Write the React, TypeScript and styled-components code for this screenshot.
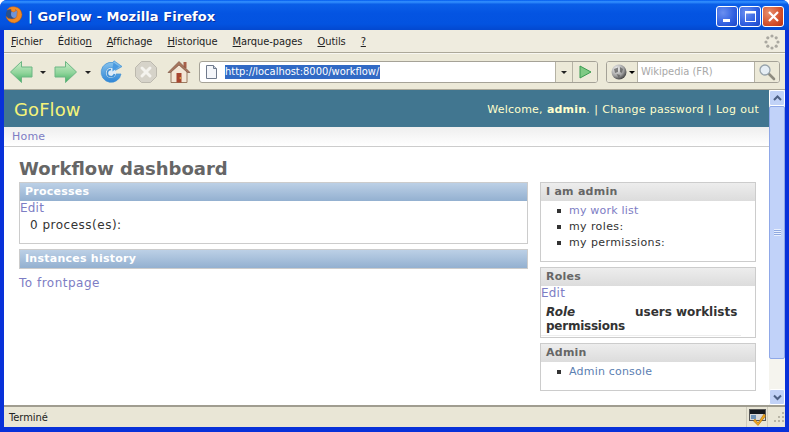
import React from "react";
import styled, { createGlobalStyle } from "styled-components";

const GlobalStyle = createGlobalStyle`
  html, body {
    margin: 0;
    padding: 0;
    overflow: hidden;
    background: #fff;
  }
  * {
    box-sizing: border-box;
  }
`;

const chromeFont = `"DejaVu Sans Condensed", "DejaVu Sans", sans-serif`;

const Window = styled.div`
  width: 789px;
  height: 432px;
  display: flex;
  flex-direction: column;
  overflow: hidden;
  border-radius: 7px 7px 0 0;
  background: #0831d9;
  font-family: "Liberation Sans", Arial, sans-serif;
`;

const TitleBar = styled.div`
  height: 30px;
  flex: none;
  display: flex;
  align-items: center;
  padding: 0 5px 0 5px;
  background: linear-gradient(to bottom, #0058ee 0%, #3593ff 6%, #0a5fe8 14%, #0454e2 45%, #0353e0 80%, #0348cf 100%);
`;

const TitleText = styled.div`
  flex: 1;
  margin: 3px 0 0 5px;
  font-family: "DejaVu Sans", sans-serif;
  font-size: 13px;
  font-weight: bold;
  letter-spacing: 0.08px;
  color: #fff;
  text-shadow: 1px 1px 0 #0a2c9a;
  white-space: pre;
`;

const CaptionButtons = styled.div`
  display: flex;
  gap: 1px;
  margin-top: 3px;
`;

const CaptionButton = styled.div<{ $close?: boolean }>`
  width: 22px;
  height: 21px;
  border: 1px solid #fff;
  border-radius: 3px;
  display: flex;
  align-items: center;
  justify-content: center;
  background: ${(p) =>
    p.$close
      ? "radial-gradient(circle at 30% 30%, #e8906e, #d4502c 60%, #b93212)"
      : "radial-gradient(circle at 30% 30%, #6a8ff0, #2f5fe0 60%, #1c46c6)"};
`;

const Chrome = styled.div`
  flex: 1;
  min-height: 0;
  margin: 0 4px;
  display: flex;
  flex-direction: column;
  background: #ece9d8;
`;

const MenuBar = styled.div`
  height: 23px;
  flex: none;
  display: flex;
  align-items: center;
  justify-content: space-between;
  padding: 1px 5px 0 7px;
  border-bottom: 1px solid #aca899;
  background: #efecdf;
`;

const MenuItems = styled.div`
  display: flex;
  gap: 15px;
  font-size: 11px;
  letter-spacing: -0.06px;
  font-family: ${chromeFont};
  color: #222;
`;

const MenuKey = styled.span`
  text-decoration: underline;
`;

const NavBar = styled.div`
  height: 36px;
  flex: none;
  display: flex;
  align-items: center;
  padding: 0 5px 0 5px;
  border-top: 1px solid #f8f7f1;
  background: #ece9d8;
`;

const NavIcon = styled.div<{ $gap?: number }>`
  display: flex;
  margin-right: ${(p) => p.$gap ?? 0}px;
`;

const Dropdown = styled.div<{ $before?: number; $gap: number; $dark?: boolean }>`
  width: 0;
  height: 0;
  margin: 2px ${(p) => p.$gap}px 0 ${(p) => p.$before ?? 6}px;
  border-left: 3px solid transparent;
  border-right: 3px solid transparent;
  border-top: 3px solid ${(p) => (p.$dark ? "#000" : "#222")};
`;

const UrlBox = styled.div`
  width: 399px;
  height: 22px;
  flex: none;
  display: flex;
  align-items: center;
  margin-left: 8px;
  margin-right: 8px;
  border: 1px solid #a5a297;
  border-radius: 3px;
  background: #fff;
  overflow: hidden;
`;

const UrlText = styled.div`
  flex: 1;
  display: flex;
  align-items: center;
  padding-left: 6px;
  font-family: ${chromeFont};
  font-size: 11px;
`;

const UrlSelected = styled.span`
  margin-left: 8px;
  padding: 0 1px 1px 0;
  background: #316ac5;
  color: #fff;
`;

const BoxCell = styled.div<{ $w: number }>`
  width: ${(p) => p.$w}px;
  height: 100%;
  flex: none;
  display: flex;
  align-items: center;
  justify-content: center;
  border-left: 1px solid #b5b2a4;
  background: #ece9d8;
`;

const SearchBox = styled.div`
  flex: 1;
  height: 22px;
  display: flex;
  align-items: center;
  border: 1px solid #a5a297;
  border-radius: 3px;
  overflow: hidden;
  background: #fff;
`;

const EnginePicker = styled.div`
  width: 31px;
  height: 100%;
  flex: none;
  display: flex;
  align-items: center;
  padding-left: 4px;
  background: #ece9d8;
  border-right: 1px solid #b5b2a4;
`;

const SearchHint = styled.div`
  flex: 1;
  padding-left: 3px;
  font-family: ${chromeFont};
  font-size: 11px;
  color: #a8a8a8;
  white-space: nowrap;
`;

const Viewport = styled.div`
  flex: 1;
  min-height: 0;
  display: flex;
  border-top: 1px solid #aca899;
  background: #fff;
`;

const Page = styled.div`
  flex: 1;
  min-width: 0;
  font-family: "DejaVu Sans", sans-serif;
  font-size: 11px;
  color: #333;
`;

const Header = styled.div`
  height: 37px;
  display: flex;
  align-items: center;
  justify-content: space-between;
  padding: 1px 10px 0;
  background: #417690;
  color: #ffc;
`;

const Brand = styled.div`
  font-size: 18px;
  letter-spacing: 0.1px;
  color: #f4f379;
`;

const UserTools = styled.div`
  font-size: 11px;
  letter-spacing: 0.2px;
  word-spacing: 0.5px;
`;

const Breadcrumbs = styled.div`
  height: 20px;
  display: flex;
  align-items: center;
  padding-left: 8px;
  border-bottom: 1px solid #ccc;
  background: linear-gradient(to bottom, #eee, #fff);
  color: #5b80b2;
`;

const Content = styled.div`
  padding: 10px 13px 0 15px;
`;

const PageTitle = styled.h1`
  margin: 0 0 2px;
  height: 23px;
  line-height: 23px;
  font-size: 18px;
  font-weight: bold;
  color: #666;
`;

const Columns = styled.div`
  display: grid;
  grid-template-columns: 509px 216px;
  column-gap: 12px;
  align-items: start;
`;

const Column = styled.div`
  display: flex;
  flex-direction: column;
  gap: 5px;
`;

const Module = styled.div<{ $h: number }>`
  height: ${(p) => p.$h}px;
  border: 1px solid #ccc;
`;

const PrimaryCaption = styled.div`
  height: 18px;
  line-height: 17px;
  padding-left: 5px;
  font-weight: bold;
  font-size: 11px;
  letter-spacing: 0.25px;
  color: #fff;
  background: linear-gradient(to bottom, #bcd0e6, #93b0d0);
`;

const SideCaption = styled.div`
  height: 18px;
  line-height: 17px;
  padding-left: 5px;
  font-weight: bold;
  font-size: 11px;
  letter-spacing: 0.25px;
  color: #666;
  background: linear-gradient(to bottom, #ededed, #dcdcdc);
`;

const ActionLink = styled.a<{ $muted?: boolean }>`
  color: ${(p) => (p.$muted ? "#7d7dc4" : "#5b80b2")};
  text-decoration: none;
  letter-spacing: 0.2px;
`;

const EditLine = styled.div`
  height: 16px;
  line-height: 15px;
  font-size: 12px;
`;

const ProcessLine = styled.div`
  padding: 1px 0 0 10px;
  height: 16px;
  letter-spacing: 0.5px;
  font-size: 12px;
  line-height: 15px;
`;

const FrontLink = styled.div`
  margin-top: 2px;
  font-size: 12px;
  letter-spacing: 0.25px;

  a {
    letter-spacing: 0.5px;
  }
`;

const LinkList = styled.ul`
  margin: 0;
  padding: 2px 0 0 16px;
  list-style: none;
  font-size: 11px;
  line-height: 16px;
  letter-spacing: 0.4px;
`;

const LinkItem = styled.li`
  display: flex;
  align-items: center;

  &::before {
    content: "";
    width: 4px;
    height: 4px;
    margin-right: 8px;
    background: #333;
  }
`;

const RoleTable = styled.div`
  display: grid;
  grid-template-columns: 85px auto auto;
  align-content: start;
  justify-content: start;
  column-gap: 4px;
  width: 200px;
  height: 34px;
  margin-left: 0;
  padding: 3px 0 0 5px;
  border-bottom: 1px solid #eee;
  font-size: 12px;
  font-weight: bold;
  line-height: 14px;
  color: #333;
`;

const RoleCell = styled.div<{ $wide?: boolean }>`
  grid-column: ${(p) => (p.$wide ? "1 / span 3" : "auto")};
  letter-spacing: ${(p) => (p.$wide ? "-0.25px" : "0")};
  font-style: normal;
`;

const RoleHead = styled(RoleCell)`
  font-style: italic;
`;

const Scrollbar = styled.div`
  width: 16px;
  flex: none;
  display: flex;
  flex-direction: column;
  background: #f5f4ee;
`;

const ScrollEnd = styled.div`
  height: 16px;
  flex: none;
  display: flex;
  align-items: center;
  justify-content: center;
  border-radius: 2px;
  border: 1px solid #fff;
  background: #c1d2f7;
`;

const ScrollThumb = styled.div`
  height: 253px;
  flex: none;
  display: flex;
  align-items: center;
  justify-content: center;
  border: 1px solid #8fa8e8;
  border-radius: 2px;
  background: #c1d2f9;
`;

const ScrollTrack = styled.div`
  flex: 1;
`;

const GripLines = styled.div`
  width: 7px;
  height: 7px;
  background: repeating-linear-gradient(to bottom, #e8effd 0 1px, #8fa8e0 1px 2px);
`;

const StatusBar = styled.div`
  height: 22px;
  flex: none;
  display: flex;
  align-items: center;
  justify-content: space-between;
  padding: 0 0 0 5px;
  border-top: 2px solid #a09d90;
  background: #e9e6d6;
  font-family: ${chromeFont};
  font-size: 11px;
  color: #222;
`;

const StatusRight = styled.div`
  display: flex;
  align-items: center;
  gap: 5px;
  height: 100%;
`;

const StatusPane = styled.div`
  height: 100%;
  display: flex;
  align-items: center;
  padding: 0 1px 0 2px;
  border-left: 1px solid #cfccbc;
  border-right: 1px solid #cfccbc;
`;

const BottomEdge = styled.div`
  height: 5px;
  flex: none;
`;

const ArrowIcon = ({ flip }: { flip?: boolean }) => (
  <svg width="24" height="24" viewBox="0 0 24 24" style={flip ? { transform: "scaleX(-1)" } : undefined}>
    <defs>
      <linearGradient id={flip ? "arrF" : "arrB"} x1="0" y1="0" x2="0" y2="1">
        <stop offset="0" stopColor="#cdeecb" />
        <stop offset="0.55" stopColor="#8fd49a" />
        <stop offset="1" stopColor="#3fae60" />
      </linearGradient>
    </defs>
    <path
      d="M1.5 12 L12.5 1.5 V7 H23 V17 H12.5 V22.5 Z"
      fill={`url(#${flip ? "arrF" : "arrB"})`}
      stroke="#6db684"
      strokeLinejoin="round"
    />
  </svg>
);

const ReloadIcon = () => (
  <svg width="24" height="24" viewBox="0 0 24 24">
    <defs>
      <linearGradient id="reloadBlue" x1="0" y1="0" x2="0" y2="1">
        <stop offset="0" stopColor="#8cc6ee" />
        <stop offset="1" stopColor="#2f86d6" />
      </linearGradient>
    </defs>
    <path
      d="M14 2.5 A10 10 0 1 0 22 14 H16.5 A5 5 0 1 1 13.5 8.2 V12 L23 6.5 L15 0.8 Z"
      fill="url(#reloadBlue)"
      stroke="#3f8fd4"
      strokeWidth="0.7"
      strokeLinejoin="round"
    />
    <circle cx="12" cy="13" r="5" fill="#dcebf8" />
    <path d="M12 9.5 A3.6 3.6 0 1 0 15.5 14" stroke="#3f8fd4" strokeWidth="1.6" fill="none" />
    <path d="M13.5 7.5 V11.5 L20 6.5 L14.5 2.5 Z" fill="#4a9ae0" />
  </svg>
);

const StopIcon = () => (
  <svg width="24" height="24" viewBox="0 0 24 24">
    <path d="M7.5 1.5 H16.5 L22.5 7.5 V16.5 L16.5 22.5 H7.5 L1.5 16.5 V7.5 Z" fill="#d6d3c9" stroke="#bcb9ae" />
    <path d="M8 8 L16 16 M16 8 L8 16" stroke="#f4f3ee" strokeWidth="3" strokeLinecap="round" />
  </svg>
);

const HomeIcon = () => (
  <svg width="24" height="24" viewBox="0 0 24 24">
    <path d="M4 11 V22.5 H20 V11 L12 4 Z" fill="#f3e7d6" stroke="#9a7a60" />
    <rect x="16.5" y="2" width="3" height="6" fill="#a8604a" />
    <path d="M1 12.5 L12 1.5 L23 12.5 L20.5 12.5 L12 5 L3.5 12.5 Z" fill="#a8765e" stroke="#7d5543" strokeWidth="0.7" />
    <rect x="9.5" y="13" width="5" height="9.5" fill="#a8452e" />
    <circle cx="13.3" cy="18" r="0.8" fill="#f1d84a" />
  </svg>
);

const FoxIcon = () => (
  <svg width="18" height="18" viewBox="0 0 18 18">
    <circle cx="9" cy="9" r="8.2" fill="#28508f" />
    <circle cx="10" cy="8" r="4" fill="#6f94d6" />
    <path
      d="M2 4 Q4.5 0 9.5 0.8 Q16 1.5 17 8.5 Q16.5 15 9.5 17 Q3 16.8 1 10.5 Q3.5 13.5 7.5 13 Q12.5 12.5 12 8 Q13.5 5.5 10.5 3.5 Q11.5 5.5 8.5 6 Q5.5 5.5 6 3 Q4 3 2 4 Z"
      fill="#f08a24"
      stroke="#c8601a"
      strokeWidth="0.5"
    />
  </svg>
);

const PageIcon = () => (
  <svg width="11" height="14" viewBox="0 0 11 14">
    <path d="M0.5 0.5 H7.5 L10.5 3.5 V13.5 H0.5 Z" fill="#f4f6fa" stroke="#6f7a8c" />
    <path d="M7.5 0.5 V3.5 H10.5" fill="#cdd5e2" stroke="#6f7a8c" />
  </svg>
);

const GoIcon = () => (
  <svg width="14" height="14" viewBox="0 0 14 14">
    <path d="M2 1 L13 7 L2 13 Z" fill="#7fca84" stroke="#3a9a50" strokeLinejoin="round" />
  </svg>
);

const WikiIcon = () => (
  <svg width="16" height="16" viewBox="0 0 16 16">
    <defs>
      <radialGradient id="wikiGlobe" cx="0.35" cy="0.3" r="0.85">
        <stop offset="0" stopColor="#f4f4f4" />
        <stop offset="0.55" stopColor="#a0a0a0" />
        <stop offset="1" stopColor="#1c1c1c" />
      </radialGradient>
    </defs>
    <circle cx="8" cy="8" r="7.5" fill="url(#wikiGlobe)" />
    <path d="M3 5 L7 3.5 L7 8 L4 9 Z M9 3 L12 5 L11 9 L9 8 Z M5.5 10 L9 11 L8 14 Z" fill="#5c5c5c" opacity="0.75" />
  </svg>
);

const MagnifierIcon = () => (
  <svg width="18" height="18" viewBox="0 0 18 18">
    <path d="M10.5 10.5 L16 16" stroke="#8f8c80" strokeWidth="2.6" strokeLinecap="round" />
    <circle cx="7" cy="7" r="5" fill="#e6eef5" stroke="#97a3ab" strokeWidth="1.3" />
  </svg>
);

const ThrobberIcon = () => (
  <svg width="16" height="16" viewBox="0 0 16 16" fill="#aaa8a0">
    <circle cx="8" cy="2" r="1.6" />
    <circle cx="12.2" cy="3.8" r="1.6" />
    <circle cx="14" cy="8" r="1.6" />
    <circle cx="12.2" cy="12.2" r="1.6" />
    <circle cx="8" cy="14" r="1.6" />
    <circle cx="3.8" cy="12.2" r="1.6" />
    <circle cx="2" cy="8" r="1.6" />
    <circle cx="3.8" cy="3.8" r="1.6" />
  </svg>
);

const ExtensionIcon = () => (
  <svg width="17" height="17" viewBox="0 0 17 17">
    <rect x="0.5" y="0.5" width="16" height="11" fill="#d8d8d8" stroke="#555" />
    <rect x="1" y="1" width="15" height="4" fill="#14181e" />
    <rect x="2" y="6" width="5" height="4" fill="#6f93b8" />
    <path d="M6 10 L9 14 L15 5 L16.5 7 L9 16.5 L4.5 12 Z" fill="#f2a81d" stroke="#a86c08" strokeWidth="0.6" />
  </svg>
);

const ResizeGrip = () => (
  <svg width="12" height="12" viewBox="0 0 12 12" fill="#b8b5a6">
    <rect x="9" y="1" width="2" height="2" />
    <rect x="5" y="5" width="2" height="2" />
    <rect x="9" y="5" width="2" height="2" />
    <rect x="1" y="9" width="2" height="2" />
    <rect x="5" y="9" width="2" height="2" />
    <rect x="9" y="9" width="2" height="2" />
  </svg>
);

const Chevron = ({ down }: { down?: boolean }) => (
  <svg width="9" height="7" viewBox="0 0 9 7">
    <path d={down ? "M1 1.5 L4.5 5 L8 1.5" : "M1 5 L4.5 1.5 L8 5"} stroke="#4d6185" strokeWidth="2" fill="none" />
  </svg>
);

export default function App() {
  return (
    <>
      <GlobalStyle />
      <Window>
        <TitleBar>
          <FoxIcon />
          <TitleText>| GoFlow - Mozilla Firefox</TitleText>
          <CaptionButtons>
            <CaptionButton>
              <svg width="13" height="13" viewBox="0 0 13 13">
                <rect x="2" y="9" width="7" height="3" fill="#fff" />
              </svg>
            </CaptionButton>
            <CaptionButton>
              <svg width="13" height="13" viewBox="0 0 13 13">
                <rect x="1.5" y="1.5" width="10" height="10" fill="none" stroke="#fff" />
                <rect x="1" y="1" width="11" height="2.5" fill="#fff" />
              </svg>
            </CaptionButton>
            <CaptionButton $close>
              <svg width="13" height="13" viewBox="0 0 13 13">
                <path d="M2 2 L11 11 M11 2 L2 11" stroke="#fff" strokeWidth="2.2" />
              </svg>
            </CaptionButton>
          </CaptionButtons>
        </TitleBar>
        <Chrome>
          <MenuBar>
            <MenuItems>
              <span><MenuKey>F</MenuKey>ichier</span>
              <span>Éditio<MenuKey>n</MenuKey></span>
              <span><MenuKey>A</MenuKey>ffichage</span>
              <span><MenuKey>H</MenuKey>istorique</span>
              <span><MenuKey>M</MenuKey>arque-pages</span>
              <span><MenuKey>O</MenuKey>utils</span>
              <span><MenuKey>?</MenuKey></span>
            </MenuItems>
            <ThrobberIcon />
          </MenuBar>
          <NavBar>
            <NavIcon><ArrowIcon /></NavIcon>
            <Dropdown $before={7} $gap={8} />
            <NavIcon><ArrowIcon flip /></NavIcon>
            <Dropdown $before={7} $gap={8} />
            <NavIcon $gap={11}><ReloadIcon /></NavIcon>
            <NavIcon $gap={9}><StopIcon /></NavIcon>
            <NavIcon><HomeIcon /></NavIcon>
            <UrlBox>
              <UrlText>
                <PageIcon />
                <UrlSelected>http://localhost:8000/workflow/</UrlSelected>
              </UrlText>
              <BoxCell $w={17}><Dropdown $before={0} $gap={0} /></BoxCell>
              <BoxCell $w={25}><GoIcon /></BoxCell>
            </UrlBox>
            <SearchBox>
              <EnginePicker>
                <WikiIcon />
                <Dropdown $before={2} $gap={0} $dark />
              </EnginePicker>
              <SearchHint>Wikipedia (FR)</SearchHint>
              <BoxCell $w={25}><MagnifierIcon /></BoxCell>
            </SearchBox>
          </NavBar>
          <Viewport>
            <Page>
              <Header>
                <Brand>GoFlow</Brand>
                <UserTools>Welcome, <strong>admin</strong>. | Change password | Log out</UserTools>
              </Header>
              <Breadcrumbs>
                <ActionLink $muted>Home</ActionLink>
              </Breadcrumbs>
              <Content>
                <PageTitle>Workflow dashboard</PageTitle>
                <Columns>
                  <Column>
                    <Module $h={62}>
                      <PrimaryCaption>Processes</PrimaryCaption>
                      <EditLine><ActionLink $muted>Edit</ActionLink></EditLine>
                      <ProcessLine>0 process(es):</ProcessLine>
                    </Module>
                    <Module $h={20}>
                      <PrimaryCaption>Instances history</PrimaryCaption>
                    </Module>
                    <FrontLink><ActionLink $muted>To frontpage</ActionLink></FrontLink>
                  </Column>
                  <Column>
                    <Module $h={80}>
                      <SideCaption>I am admin</SideCaption>
                      <LinkList>
                        <LinkItem><ActionLink $muted>my work list</ActionLink></LinkItem>
                        <LinkItem>my roles:</LinkItem>
                        <LinkItem>my permissions:</LinkItem>
                      </LinkList>
                    </Module>
                    <Module $h={71}>
                      <SideCaption>Roles</SideCaption>
                      <EditLine><ActionLink $muted>Edit</ActionLink></EditLine>
                      <RoleTable>
                        <RoleHead>Role</RoleHead>
                        <RoleCell>users</RoleCell>
                        <RoleCell>worklists</RoleCell>
                        <RoleCell $wide>permissions</RoleCell>
                      </RoleTable>
                    </Module>
                    <Module $h={48}>
                      <SideCaption>Admin</SideCaption>
                      <LinkList>
                        <LinkItem><ActionLink>Admin console</ActionLink></LinkItem>
                      </LinkList>
                    </Module>
                  </Column>
                </Columns>
              </Content>
            </Page>
            <Scrollbar>
              <ScrollEnd><Chevron /></ScrollEnd>
              <ScrollThumb><GripLines /></ScrollThumb>
              <ScrollTrack />
              <ScrollEnd><Chevron down /></ScrollEnd>
            </Scrollbar>
          </Viewport>
          <StatusBar>
            <span>Terminé</span>
            <StatusRight>
              <StatusPane><ExtensionIcon /></StatusPane>
              <ResizeGrip />
            </StatusRight>
          </StatusBar>
        </Chrome>
        <BottomEdge />
      </Window>
    </>
  );
}
